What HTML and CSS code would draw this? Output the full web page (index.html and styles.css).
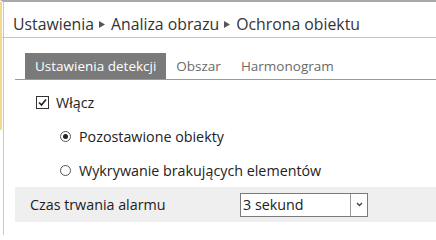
FILE: index.html
```html
<!DOCTYPE html>
<html lang="pl">
<head>
<meta charset="utf-8">
<link rel="stylesheet" href="styles.css">
</head>
<body>
<div class="frame">
  <div class="accent"></div>
  <div class="crumb">
    <span>Ustawienia</span>
    <svg class="arr" width="6" height="7" viewBox="0 0 6 7"><path d="M0 0L6 3.5L0 7Z" fill="#555"/></svg>
    <span>Analiza obrazu</span>
    <svg class="arr" width="6" height="7" viewBox="0 0 6 7"><path d="M0 0L6 3.5L0 7Z" fill="#555"/></svg>
    <span>Ochrona obiektu</span>
  </div>
  <div class="content">
    <div class="tabs">
      <span class="tab active">Ustawienia detekcji</span>
      <span class="tab">Obszar</span>
      <span class="tab">Harmonogram</span>
    </div>
    <div class="opt check-row">
      <span class="checkbox"><svg width="11" height="11" viewBox="0 0 11 11"><path d="M2 5.5L4.5 8L9 2.5" fill="none" stroke="#222" stroke-width="1.6"/></svg></span>
      <span>Włącz</span>
    </div>
    <div class="opt radio-row">
      <span class="radio checked"></span>
      <span>Pozostawione obiekty</span>
    </div>
    <div class="opt radio-row last">
      <span class="radio"></span>
      <span>Wykrywanie brakujących elementów</span>
    </div>
    <div class="field">
      <span class="label">Czas trwania alarmu</span>
      <div class="select">
        <span class="value">3 sekund</span>
        <span class="drop"><svg width="7" height="5" viewBox="0 0 7 5"><path d="M1 1L3.5 3.5L6 1" fill="none" stroke="#444" stroke-width="1.4"/></svg></span>
      </div>
    </div>
  </div>
</div>
</body>
</html>
```
FILE: styles.css
```css
html, body {
  margin: 0;
  padding: 0;
  background: #fff;
}
body {
  font-family: "Open Sans", "Noto Sans", sans-serif;
  color: #222;
  width: 436px;
  height: 235px;
  overflow: hidden;
}
.frame {
  position: relative;
  height: 233px;
  border-top: 2px solid #a9a9a9;
  border-left: 3px solid #fff;
  box-shadow: inset 1px 0 0 #c8c8c8;
}
.accent {
  position: absolute;
  left: -3px;
  top: 0;
  width: 2px;
  height: 128px;
  background: #f3d98e;
}
.crumb {
  height: 36px;
  box-sizing: border-box;
  border-bottom: 1px solid #c4c4c4;
  padding: 8px 0 0 11px;
  font-size: 15.8px;
  line-height: 24px;
  color: #333;
  display: flex;
  align-items: center;
  margin-left: -1px;
}
.arr {
  flex: none;
  margin: 1px 6px 0 5px;
}
.content {
  padding-left: 12px;
}
.tabs {
  margin-top: 15px;
  height: 26px;
  border-bottom: 1px solid #9a9a9a;
  padding-left: 10px;
  display: flex;
}
.tab {
  padding: 0 10px;
  line-height: 26px;
  font-size: 13.5px;
  color: #6a6a6a;
}
.tab.active {
  background: #7a7a7a;
  color: #fff;
}
.opt {
  display: flex;
  align-items: center;
  height: 34px;
  font-size: 14.3px;
}
.check-row {
  margin-top: 5px;
  padding-left: 21px;
  gap: 7px;
}
.radio-row {
  padding-left: 45px;
  gap: 8px;
}
.checkbox {
  width: 11px;
  height: 11px;
  border: 1px solid #333;
  display: flex;
  align-items: center;
  justify-content: center;
}
.radio {
  width: 9px;
  height: 9px;
  border: 1px solid #555;
  border-radius: 50%;
  position: relative;
  background: #fff;
}
.radio.checked::after {
  content: "";
  position: absolute;
  left: 2px;
  top: 2px;
  width: 5px;
  height: 5px;
  border-radius: 50%;
  background: #222;
}
.field {
  background: #efefef;
  height: 35px;
  display: flex;
  align-items: center;
  padding-left: 15px;
  font-size: 14.3px;
}
.label {
  width: 210px;
}
.select {
  width: 126px;
  height: 22px;
  border: 1px solid #7a7a7a;
  background: #fff;
  display: flex;
}
.value {
  flex: 1;
  padding-left: 2px;
  line-height: 22px;
}
.drop {
  width: 16px;
  border-left: 1px solid #9a9a9a;
  display: flex;
  align-items: center;
  justify-content: center;
}
```
